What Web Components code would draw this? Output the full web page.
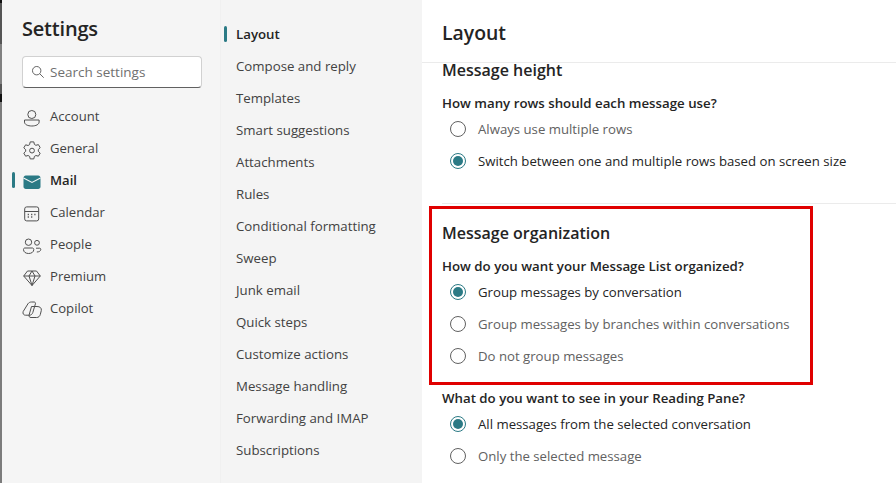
<!DOCTYPE html>
<html>
<head>
<meta charset="utf-8">
<title>Settings</title>
<style>
  html, body { margin: 0; height: 100%; overflow: hidden; background: #f5f5f5; }
  body { font-family: "Open Sans", "Noto Sans", sans-serif; color: #242424; }
</style>
</head>
<body>
<settings-dialog>
  <settings-nav slot="nav"></settings-nav>
  <sub-nav slot="sub"></sub-nav>
  <layout-pane slot="pane"></layout-pane>
</settings-dialog>

<script>
const ICONS = {
  search: '<circle cx="6.500" cy="6.500" r="4.800"/><path d="M10 10L14.500 14.500"/>',
  account: '<circle cx="9.800" cy="6.500" r="4"/><path d="M2.500 12h14.600v2c0 2.500-3.200 4-7.300 4s-7.300-1.500-7.300-4z"/>',
  general: '<path d="M8.200 1.900h3.600l.6 2.500 1.500.9 2.500-.7 1.800 3.100-1.900 1.800v1.800l1.900 1.800-1.800 3.100-2.500-.7-1.500.9-.6 2.500H8.200l-.6-2.500-1.500-.9-2.500.7-1.800-3.100 1.900-1.800V9.700L1.800 7.900l1.800-3.100 2.500.7 1.500-.9z"/><circle cx="10" cy="10.600" r="2.400"/>',
  calendar: '<rect x="2.700" y="2.900" width="14" height="14" rx="2"/><path d="M2.700 7.500h14"/><path stroke-width="1.500" d="M5.700 10.500h1.200M9.100 10.500h1.200M12.300 10.500h1.200M5.700 13h1.200M9.100 13h1.200"/>',
  people: '<circle cx="6.500" cy="6.200" r="3.200"/><circle cx="15" cy="6.800" r="2.400"/><path d="M1.500 13.500c0-.9.600-1.500 1.400-1.500h7.400c.9 0 1.500.6 1.500 1.500 0 2.500-2.300 4-5.200 4s-5.100-1.500-5.100-4z"/><path d="M14 12.200h3.600c.7 0 1.200.5 1.200 1.100 0 1.800-1.800 2.700-4 2.700"/>',
  premium: '<path d="M5.500 3h9l3.800 5-8.300 9.500L1.700 8z"/><path d="M1.700 8h16.600M7 8l3-5 3 5-3 9.500z"/>',
  copilot: '<path d="M6 3.700C6.800 2.600 8 2 9.500 2H12c1.200 0 1.700.8 1.400 1.900l-2.600 8.600c-.5 1.600-1.700 2.700-3.300 2.700h-4c-2 0-3-1.700-2.300-3.700z"/><path d="M9.500 6.500H15c2.900 0 4.800 1.500 4.300 4l-1 4c-.5 1.800-1.800 3-3.600 3H9c-1.500 0-2.300-1-1.900-2.500z"/>'
};

class SvgIcon extends HTMLElement {
  connectedCallback() {
    const name = this.getAttribute('name');
    const size = this.getAttribute('size') || 20;
    const box = name === 'search' ? '0 0 16 16' : '0 0 20 20';
    this.attachShadow({ mode: 'open' }).innerHTML = `<style>
      :host { display: block; width: ${size}px; height: ${size}px; color: #505050; }
      svg { display: block; fill: none; stroke: currentColor; stroke-width: 1; overflow: visible; }
    </style><svg width="${size}" height="${size}" viewBox="${box}">${ICONS[name]}</svg>`;
  }
}
customElements.define('svg-icon', SvgIcon);

class SettingsDialog extends HTMLElement {
  constructor() {
    super();
    this.attachShadow({ mode: 'open' }).innerHTML = `<style>
      :host { display: flex; height: 483px; width: 896px; }
      .edge { width: 2px; flex: none; background: linear-gradient(#111 0 3px, #555 3px 44px, #808080 44px 84px, #555 84px 94px, #111 94px 102px, #7c7c7c 102px); }
      .nav { width: 219px; flex: none; border-right: 1px solid #f0f0f0; box-sizing: border-box; }
      .sub { width: 201px; flex: none; background: #f4f4f4; }
      .pane { flex: 1; min-width: 0; background: #fff; }
    </style>
    <div class="edge"></div>
    <div class="nav"><slot name="nav"></slot></div>
    <div class="sub"><slot name="sub"></slot></div>
    <div class="pane"><slot name="pane"></slot></div>`;
  }
}
customElements.define('settings-dialog', SettingsDialog);

class SettingsNav extends HTMLElement {
  constructor() {
    super();
    const items = [['account', 'Account'], ['general', 'General'], ['mail', 'Mail'], ['calendar', 'Calendar'], ['people', 'People'], ['premium', 'Premium'], ['copilot', 'Copilot']];
    this.attachShadow({ mode: 'open' }).innerHTML = `<style>
      :host { display: block; padding: 12px 0 0 20px; }
      h1 { margin: 0; font-size: 20px; font-weight: 600; line-height: 34px; letter-spacing: -.2px; }
      .search { display: flex; align-items: center; gap: 5px; width: 180px; height: 32px; box-sizing: border-box; margin-top: 10px; padding-left: 8px;
        background: #fff; border: 1px solid #d1d1d1; border-bottom-color: #616161; border-radius: 4px; font-size: 13.500px; color: #707070; }
      ul { list-style: none; margin: 12px 0 0; padding: 0; }
      li { position: relative; display: flex; align-items: center; gap: 8px; height: 32px; font-size: 13.100px; color: #424242; }
      li svg-icon, li .mail { margin-top: 4px; flex: none; }
      li.on { font-weight: 600; color: #242424; }
      li.on::before { content: ""; position: absolute; left: -10px; top: 8px; width: 3px; height: 16px; background: #2b7a85; border-radius: 2px; }
      .mail { width: 20px; height: 20px; display: block; }
    </style>
    <h1>Settings</h1>
    <div class="search"><svg-icon name="search" size="14"></svg-icon><span>Search settings</span></div>
    <ul>${items.map(([icon, label]) => `<li class="${label === 'Mail' ? 'on' : ''}">${icon === 'mail'
      ? '<svg class="mail" viewBox="0 0 20 20"><path fill="#2b7a85" d="M1.500 5.800C1.500 4.500 2.500 3.500 3.800 3.500h12.400c1.300 0 2.300 1 2.300 2.300v9c0 1.300-1 2.200-2.300 2.200H3.800c-1.300 0-2.300-.9-2.300-2.200z"/><path fill="none" stroke="#f5f5f5" stroke-width="1.100" d="M1.500 6l8.500 4.500L18.500 6"/></svg>'
      : `<svg-icon name="${icon}"></svg-icon>`}<span>${label}</span></li>`).join('')}</ul>`;
  }
}
customElements.define('settings-nav', SettingsNav);

class SubNav extends HTMLElement {
  constructor() {
    super();
    const items = ['Layout', 'Compose and reply', 'Templates', 'Smart suggestions', 'Attachments', 'Rules', 'Conditional formatting', 'Sweep', 'Junk email', 'Quick steps', 'Customize actions', 'Message handling', 'Forwarding and IMAP', 'Subscriptions'];
    this.attachShadow({ mode: 'open' }).innerHTML = `<style>
      :host { display: block; padding: 18px 0 0 15px; }
      div { position: relative; height: 32px; line-height: 32px; font-size: 13.250px; color: #424242; white-space: nowrap; }
      .on { font-weight: 600; color: #242424; }
      .on::before { content: ""; position: absolute; left: -12px; top: 8px; width: 3px; height: 16px; background: #2b7a85; border-radius: 2px; }
    </style>${items.map((t, i) => `<div class="${i ? '' : 'on'}">${t}</div>`).join('')}`;
  }
}
customElements.define('sub-nav', SubNav);

class RadioRow extends HTMLElement {
  constructor() {
    super();
    this.attachShadow({ mode: 'open' }).innerHTML = `<style>
      :host { display: flex; align-items: center; gap: 12px; height: 32px; padding-left: 8px; font-size: 13.200px; color: #616161; white-space: nowrap; }
      :host([checked]) { color: #242424; }
      i { width: 14px; height: 14px; border: 1px solid #616161; border-radius: 50%; display: flex; align-items: center; justify-content: center; flex: none; }
      :host([checked]) i { border-color: #2b7a85; }
      :host([checked]) i::after { content: ""; width: 10px; height: 10px; border-radius: 50%; background: #2b7a85; }
    </style><i></i><slot></slot>`;
  }
}
customElements.define('radio-row', RadioRow);

class LayoutPane extends HTMLElement {
  constructor() {
    super();
    this.attachShadow({ mode: 'open' }).innerHTML = `<style>
      :host { display: block; position: relative; height: 483px; overflow: hidden; }
      header { height: 62px; border-bottom: 1px solid #ebebeb; padding-left: 20px; font-size: 19.400px; font-weight: 600; line-height: 66px; }
      section { padding: 0 0 0 20px; }
      h2 { margin: 0; font-size: 16px; font-weight: 600; line-height: 16px; }
      h3 { margin: 0 0 1px; font-size: 13.280px; font-weight: 600; line-height: 18px; }
      .height h2 { margin-top: -1px; }
      .height h3 { margin-top: 16px; }
      .rule { height: 1px; background: #ebebeb; margin: 26px 0 0 20px; }
      .org { position: absolute; left: 7px; top: 206px; width: 384px; height: 179px; box-sizing: border-box; border: 3px solid #e00000; padding: 16px 0 0 10px; }
      .org h3 { margin-top: 16px; }
      .reading { position: absolute; left: 20px; right: 0; top: 389px; padding: 0; }
    </style>
    <header>Layout</header>
    <section class="height">
      <h2>Message height</h2>
      <h3>How many rows should each message use?</h3>
      <radio-row>Always use multiple rows</radio-row>
      <radio-row checked>Switch between one and multiple rows based on screen size</radio-row>
    </section>
    <div class="rule"></div>
    <section class="org">
      <h2>Message organization</h2>
      <h3>How do you want your Message List organized?</h3>
      <radio-row checked>Group messages by conversation</radio-row>
      <radio-row>Group messages by branches within conversations</radio-row>
      <radio-row>Do not group messages</radio-row>
    </section>
    <section class="reading">
      <h3>What do you want to see in your Reading Pane?</h3>
      <radio-row checked>All messages from the selected conversation</radio-row>
      <radio-row>Only the selected message</radio-row>
    </section>`;
  }
}
customElements.define('layout-pane', LayoutPane);
</script>
</body>
</html>
